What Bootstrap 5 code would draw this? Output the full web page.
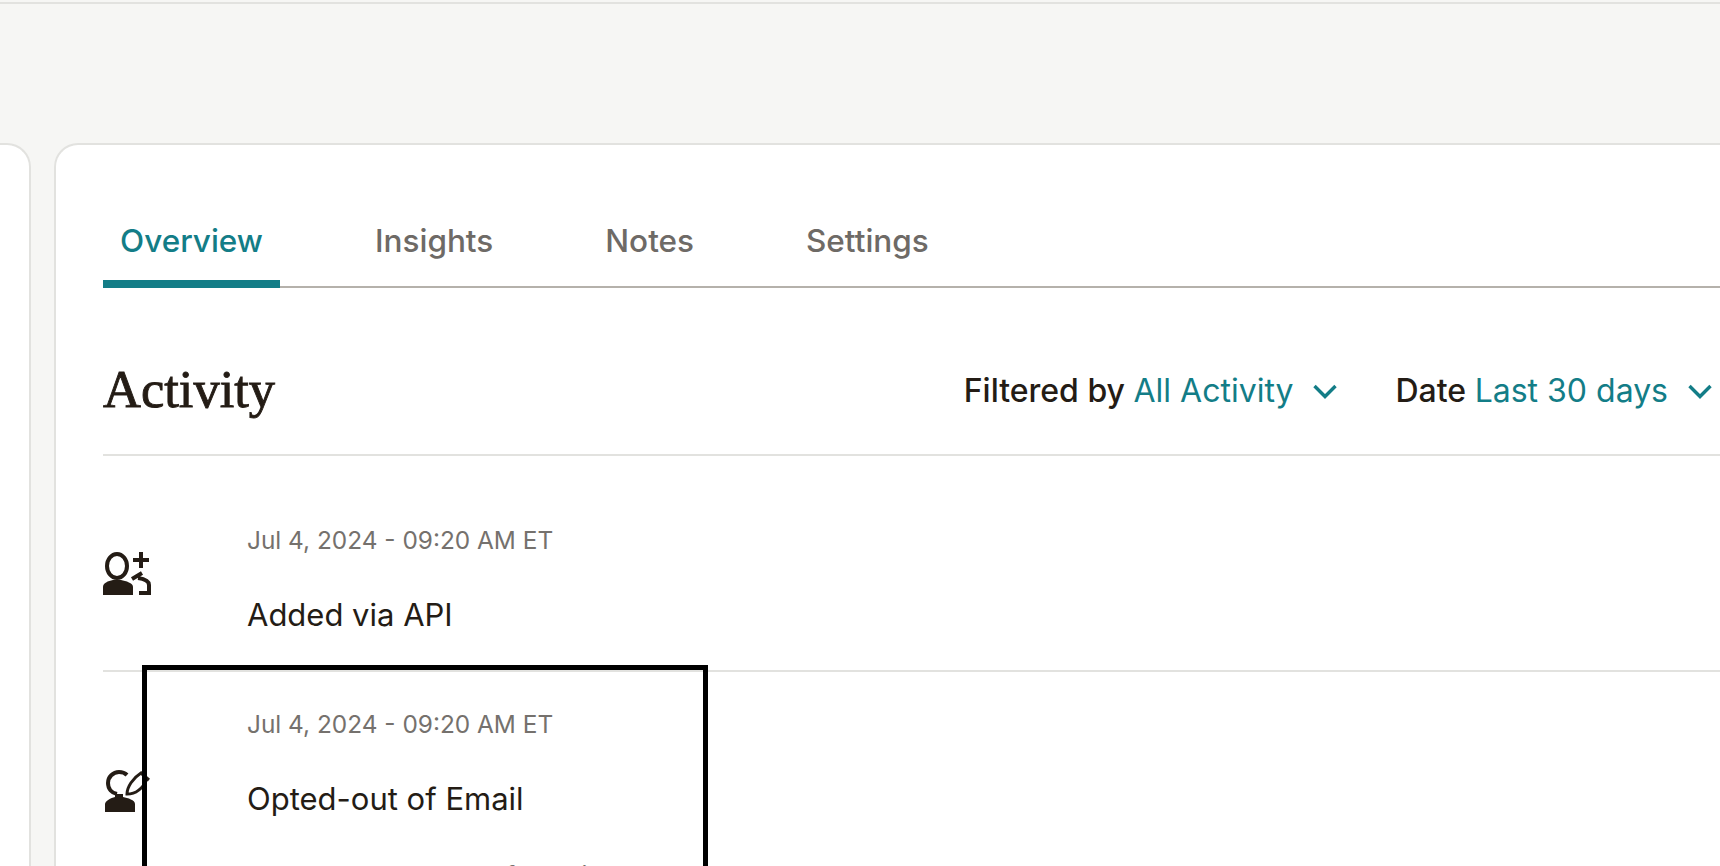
<!DOCTYPE html>
<html lang="en">
<head>
<meta charset="utf-8">
<title>Activity</title>
<link href="https://cdn.jsdelivr.net/npm/bootstrap@5.3.0/dist/css/bootstrap.min.css" rel="stylesheet">
<style>
html,body{height:866px;overflow:hidden}
body{background:#f6f6f4;color:#241c15;font-family:Inter,"Liberation Sans",sans-serif;position:relative}
.top-rule{height:4px;border-bottom:2px solid #e2e2df}
.shell{height:862px;padding-top:139px;gap:23px}
.side-panel{width:31px;background:#fff;border:2px solid #e2e2df;border-left:0;border-bottom:0;border-top-right-radius:24px;flex:none}
.main-panel{background:#fff;border:2px solid #e2e2df;border-right:0;border-bottom:0;border-top-left-radius:24px;padding:61px 0 0 47px;overflow:hidden}
.tab-row{height:82px;border-bottom:2px solid #b5b1ab;gap:78px}
.tab-item{padding:0 17px;height:82px;font-size:31.5px;font-weight:500;color:#6e6a66;line-height:70px;text-decoration:none}
.tab-item.on{color:#137d87;border-bottom:8px solid #137d87;margin-bottom:-2px}
.head-row{height:168px;border-bottom:2px solid #e2e2df;padding:40px 8px 0 0}
.page-title{font-family:"Liberation Serif",serif;font-size:52.5px;font-weight:400;margin:0 0 4px;-webkit-text-stroke:.9px #241c15}
.filter-label{font-size:32px;font-weight:500;color:#241c15}
.filter-value{font-weight:400;color:#137d87}
.chev{margin-left:20px}
.filter-next{margin-left:58px}
.event-row{height:216px;border-bottom:2px solid #e2e2df;padding-top:66px}
.event-row.follow{padding-top:34px;border-bottom:0;height:auto}
.event-icon{width:144px;flex:none;padding-top:30px}
.follow .event-icon{padding-top:64px}
.event-date{font-size:24.4px;color:#75716d;margin:0}
.event-text{font-size:31px;margin:33px 0 0;color:#241c15}
.event-note{font-size:24.4px;color:#75716d;margin:35px 0 0}
.mark-box{position:absolute;left:142px;top:665px;width:566px;bottom:0;border:5px solid #000;border-bottom:0;pointer-events:none}
</style>
</head>
<body>
<div class="top-rule"></div>
<div class="shell d-flex">
  <div class="side-panel"></div>
  <div class="main-panel flex-grow-1">
    <nav class="tab-row d-flex">
      <a class="tab-item on" href="#">Overview</a>
      <a class="tab-item" href="#">Insights</a>
      <a class="tab-item" href="#">Notes</a>
      <a class="tab-item" href="#">Settings</a>
    </nav>
    <div class="head-row d-flex justify-content-between align-items-center">
      <h1 class="page-title">Activity</h1>
      <div class="d-flex align-items-center">
        <span class="filter-label">Filtered by <span class="filter-value">All Activity</span></span>
        <svg class="chev" width="24" height="15" viewBox="0 0 24 15" fill="none" stroke="#137d87" stroke-width="3.4"><path d="M1.500 2L12 12.500 22.500 2"/></svg>
        <span class="filter-label filter-next">Date <span class="filter-value">Last 30 days</span></span>
        <svg class="chev" width="24" height="15" viewBox="0 0 24 15" fill="none" stroke="#137d87" stroke-width="3.4"><path d="M1.500 2L12 12.500 22.500 2"/></svg>
      </div>
    </div>
    <div class="event-row d-flex">
      <div class="event-icon">
        <svg width="48" height="44" viewBox="0 0 48 44" fill="none" stroke="#241c15" stroke-width="4"><ellipse cx="14" cy="14" rx="10" ry="12"/><path fill="#241c15" stroke="none" d="M0 43V35c0-4 5-6 10-7h8c5 1 12 3 12 7v8z"/><path d="M38 0v16M30 8h16M29 27l10-6M35 26c7 1 11 3 11 7v8H36"/></svg>
      </div>
      <div>
        <p class="event-date">Jul 4, 2024 - 09:20 AM ET</p>
        <p class="event-text">Added via API</p>
      </div>
    </div>
    <div class="event-row follow d-flex">
      <div class="event-icon">
        <svg width="48" height="44" viewBox="0 0 48 44" fill="none" stroke="#241c15" stroke-width="4"><path d="M24 5c-2-2-5-3-8-3-6 0-11 5-11 11 0 6 4 10 9 11"/><path fill="#241c15" stroke="none" d="M2 42V34c0-3 6-6 10-7v-3h8v3c5 1 12 3 12 7v8z"/><path stroke-width="3" d="M24 24c0-7 6-16 14-21l3 3 3 3c-4 9-11 15-20 15zM38 3l8 7"/></svg>
      </div>
      <div>
        <p class="event-date">Jul 4, 2024 - 09:20 AM ET</p>
        <p class="event-text">Opted-out of Email</p>
        <p class="event-note">Updated by Contact Information</p>
      </div>
    </div>
  </div>
</div>
<div class="mark-box"></div>
</body>
</html>
